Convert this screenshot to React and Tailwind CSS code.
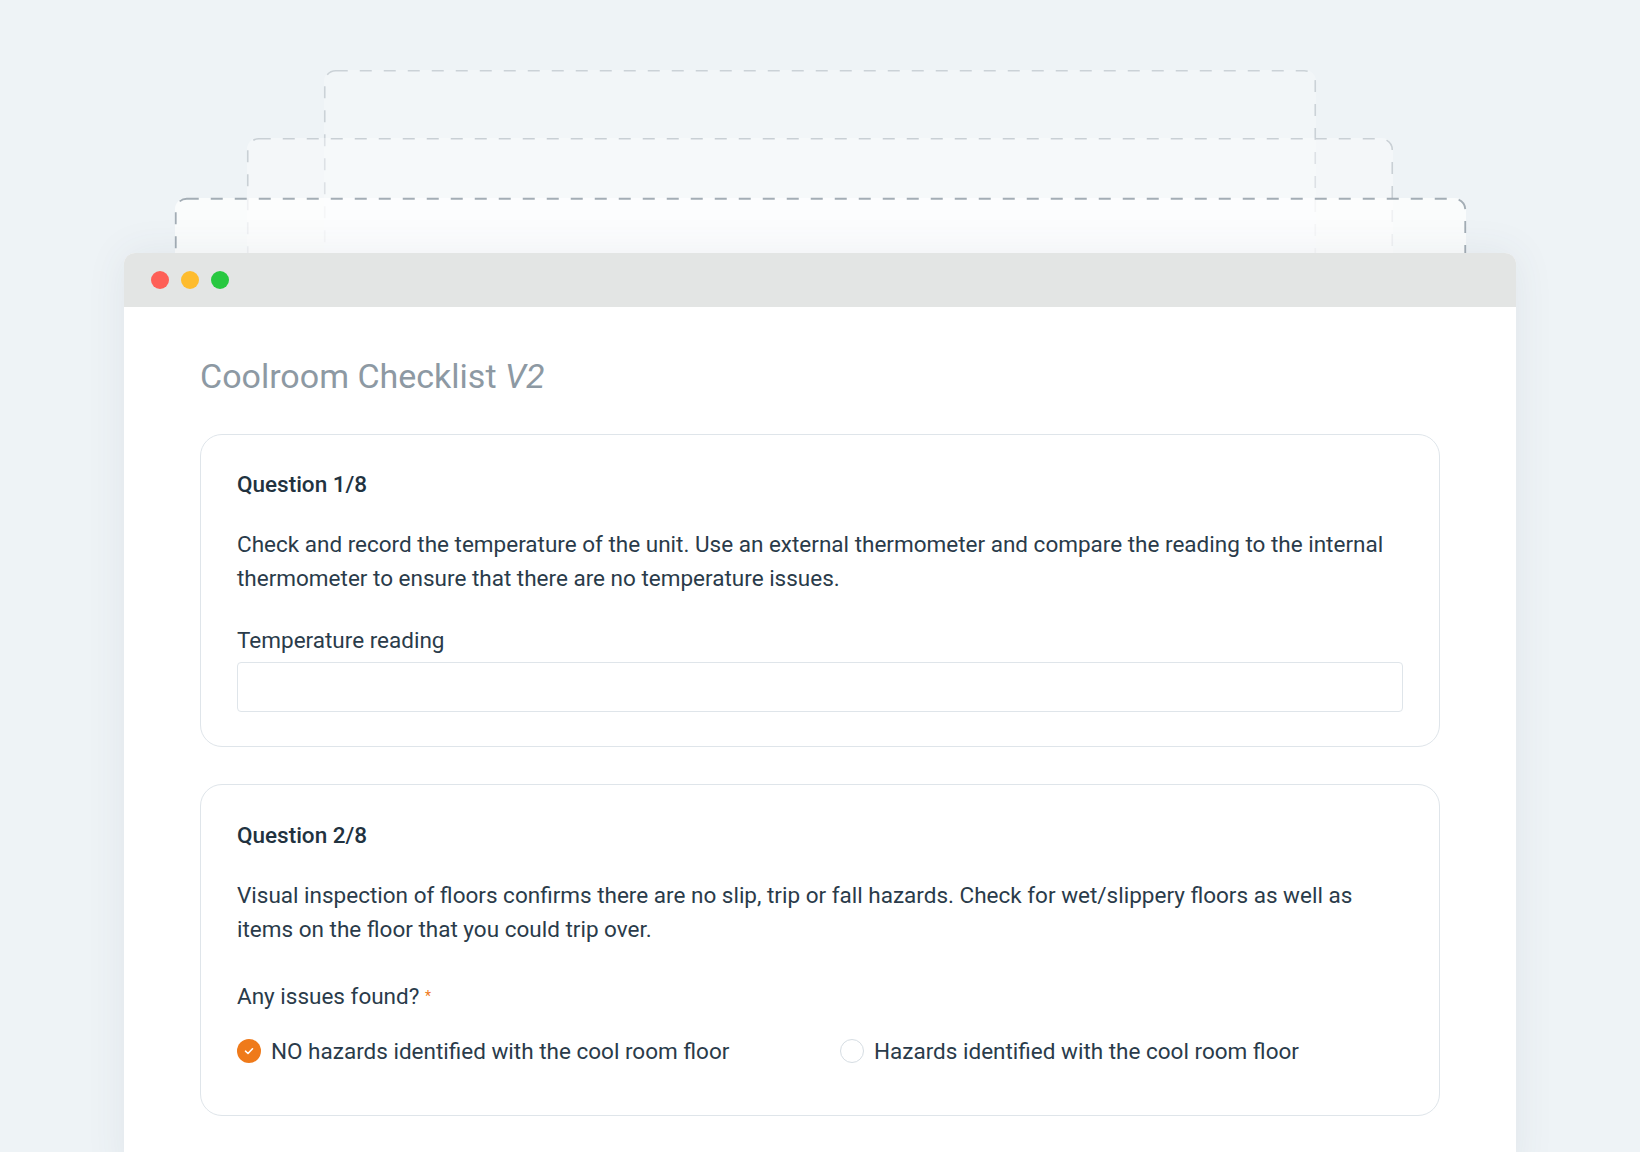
import React from "react";

function DashedFrame({ color, width }) {
  return (
    <svg className="absolute inset-0 h-full w-full overflow-visible" preserveAspectRatio="none">
      <rect x="0.75" y="0.75" width="calc(100% - 1.5px)" height="calc(100% + 20px)" rx="11" ry="11" fill="none" stroke={color} strokeWidth={width} strokeDasharray="12 12" />
    </svg>
  );
}

function StackCard({ className, color, width }) {
  return (
    <div className={"absolute rounded-t-[11px] " + className}>
      <DashedFrame color={color} width={width} />
    </div>
  );
}

function Radio({ checked, label }) {
  return (
    <div className="flex items-center gap-[10px]">
      {checked ? (
        <span className="flex h-[24px] w-[24px] items-center justify-center rounded-full bg-[#ef7a1a]">
          <svg width="12" height="12" viewBox="0 0 12 12" fill="none">
            <path d="M2.5 6.2 L5 8.5 L9.5 3.8" stroke="white" strokeWidth="1.6" strokeLinecap="round" strokeLinejoin="round" />
          </svg>
        </span>
      ) : (
        <span className="h-[24px] w-[24px] rounded-full border-[1.5px] border-[#d6dde3] bg-white" />
      )}
      <span className="leading-[28px]">{label}</span>
    </div>
  );
}

export default function App() {
  return (
    <div
      className="relative h-[1152px] w-full overflow-hidden bg-[#eef3f6] text-[22.5px] text-[#2a3b4a]"
      style={{ fontFamily: "Roboto, 'Liberation Sans', sans-serif" }}
    >
      <StackCard className="left-[324px] top-[70px] h-[240px] w-[992px] bg-white/25" color="#cbd2d7" width="1.6" />
      <StackCard className="left-[247px] top-[138px] h-[180px] w-[1146px] bg-white/35" color="#c9d0d5" width="1.6" />
      <StackCard className="left-[175px] top-[198px] h-[120px] w-[1291px] bg-white/70" color="#a3adb5" width="1.8" />

      <div className="relative ml-[124px] mt-[253px] w-[1392px] overflow-hidden rounded-t-[11px] bg-white shadow-[0_0_40px_rgba(60,80,100,0.08)]">
        <div className="flex h-[54px] items-center gap-[12px] bg-[#e3e5e4] pl-[27px]">
          <span className="h-[18px] w-[18px] rounded-full bg-[#fe5f57]" />
          <span className="h-[18px] w-[18px] rounded-full bg-[#febc2e]" />
          <span className="h-[18px] w-[18px] rounded-full bg-[#28c840]" />
        </div>

        <div className="px-[76px] pb-[60px] pt-[49px]">
          <h1 className="text-[34px] font-normal leading-[40px] text-[#8d99a3]">
            Coolroom Checklist <span className="italic">V2</span>
          </h1>

          <div className="mt-[38px] rounded-[22px] border border-[#dfe5ea] px-[36px] pb-[34px] pt-[35px]">
            <div className="font-medium leading-[28px] text-[#22323f]">Question 1/8</div>
            <p className="mt-[29px] leading-[34px]">
              Check and record the temperature of the unit. Use an external thermometer and compare the reading to the internal thermometer to ensure that there are no temperature issues.
            </p>
            <div className="mt-[31px] leading-[28px]">Temperature reading</div>
            <div className="mt-[8px] h-[50px] rounded-[4px] border border-[#dfe5ea]" />
          </div>

          <div className="mt-[37px] rounded-[22px] border border-[#dfe5ea] px-[36px] pb-[50px] pt-[36px]">
            <div className="font-medium leading-[28px] text-[#22323f]">Question 2/8</div>
            <p className="mt-[29px] leading-[34px]">
              Visual inspection of floors confirms there are no slip, trip or fall hazards. Check for wet/slippery floors as well as items on the floor that you could trip over.
            </p>
            <div className="mt-[36px] leading-[28px]">
              Any issues found? <span className="relative -top-[3px] text-[14px] text-[#ef7a1a]">*</span>
            </div>
            <div className="mt-[24px] flex">
              <div className="w-[603px]">
                <Radio checked label="NO hazards identified with the cool room floor" />
              </div>
              <Radio label="Hazards identified with the cool room floor" />
            </div>
          </div>
        </div>
      </div>
    </div>
  );
}
